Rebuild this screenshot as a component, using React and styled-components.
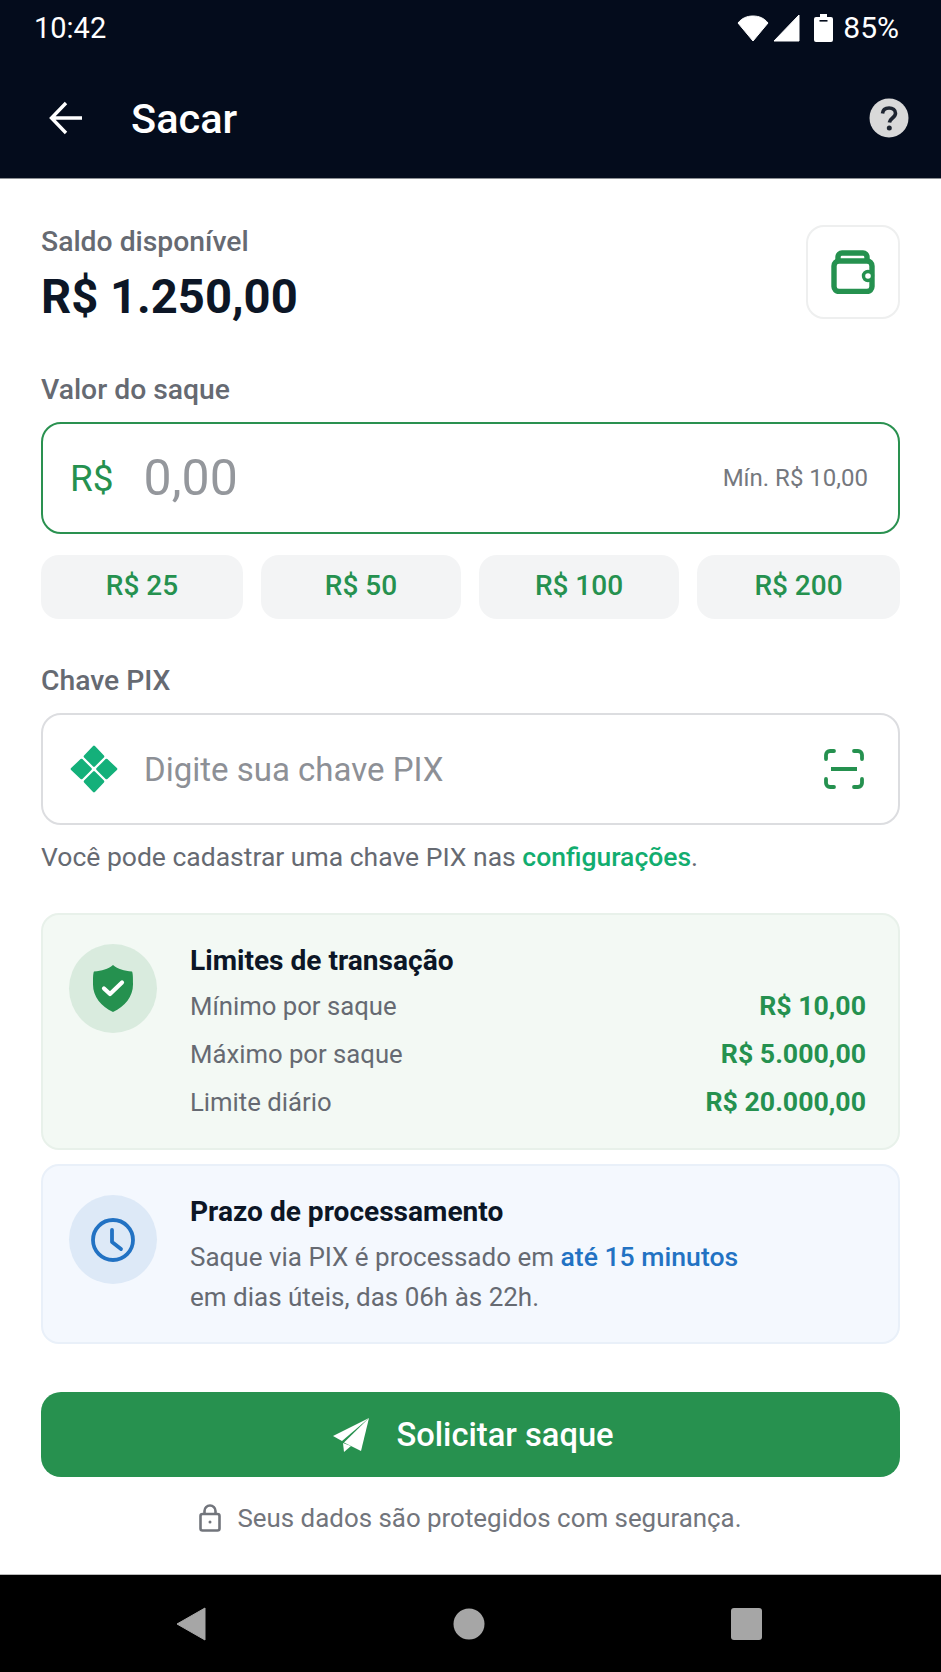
import React from "react";
import styled, { createGlobalStyle } from "styled-components";

const GlobalStyle = createGlobalStyle`
  html, body { margin: 0; padding: 0; background: #fff; }
  * { box-sizing: border-box; }
  body { font-family: Roboto, "Liberation Sans", sans-serif; }
`;

const Page = styled.div`
  width: 941px;
  height: 1672px;
  display: flex;
  flex-direction: column;
  background: #fff;
  overflow: hidden;
`;

const Header = styled.header`
  height: 179px;
  flex: none;
  background: #040c1c;
  color: #fff;
  border-bottom: 1px solid #8d9094;
`;

const StatusBar = styled.div`
  height: 55px;
  padding: 0 42px 0 34px;
  display: flex;
  align-items: center;
  justify-content: space-between;
  font-size: 29px;
`;

const StatusIcons = styled.div`
  display: flex;
  align-items: center;
`;

const StatusIcon = styled.span`
  display: flex;
  margin-right: ${(p) => p.$gap}px;
`;

const Percent = styled.span`
  font-size: 30px;
`;

const Toolbar = styled.div`
  height: 126px;
  padding: 0 32px 0 49px;
  display: flex;
  align-items: center;
`;

const Title = styled.h1`
  flex: 1;
  margin: 0 0 0 48px;
  font-size: 41.5px;
  font-weight: 500;
`;

const Main = styled.main`
  flex: 1;
  padding: 45px 41px 0;
  display: flex;
  flex-direction: column;
`;

const BalanceRow = styled.div`
  display: flex;
  justify-content: space-between;
  align-items: flex-start;
`;

const Label = styled.div`
  font-size: 28.3px;
  line-height: 36px;
  font-weight: 500;
  color: #666a72;
  margin-top: ${(p) => p.$top || 0}px;
`;

const Balance = styled.div`
  font-size: 47.2px;
  line-height: 56px;
  font-weight: 700;
  color: #0c1626;
  margin-top: 9px;
`;

const WalletBox = styled.div`
  width: 94px;
  height: 94px;
  margin-top: 1px;
  border: 2px solid #eeefef;
  border-radius: 18px;
  display: flex;
  align-items: center;
  justify-content: center;
`;

const Field = styled.div`
  height: 112px;
  margin-top: 14px;
  padding: 0 ${(p) => p.$right}px 0 ${(p) => p.$left}px;
  display: flex;
  align-items: center;
  border: 2px solid ${(p) => p.$border};
  border-radius: 20px;
`;

const Currency = styled.span`
  font-size: 37px;
  color: #25914f;
`;

const AmountHint = styled.span`
  flex: 1;
  margin-left: 30px;
  font-size: 50px;
  color: #94979c;
`;

const MinNote = styled.span`
  font-size: 24px;
  color: #75787e;
`;

const Chips = styled.div`
  display: grid;
  grid-template-columns: 202fr 200fr 200fr 203fr;
  gap: 18px;
  margin-top: 21px;
`;

const Chip = styled.div`
  height: 64px;
  padding-bottom: 3px;
  border-radius: 18px;
  background: #f3f4f5;
  color: #25914f;
  font-size: 28px;
  font-weight: 500;
  display: flex;
  align-items: center;
  justify-content: center;
`;

const KeyHint = styled.span`
  flex: 1;
  margin-left: 26px;
  font-size: 33px;
  color: #8d9096;
`;

const HelpText = styled.p`
  margin: 16px 0 0;
  font-size: 26.5px;
  line-height: 32px;
  color: #666a72;
`;

const Link = styled.span`
  color: #12ad6f;
  font-weight: 500;
`;

const InfoCard = styled.section`
  margin-top: ${(p) => p.$top}px;
  height: ${(p) => p.$h}px;
  padding: 29px 32px 0 26px;
  display: flex;
  gap: 33px;
  border: 2px solid ${(p) => p.$border};
  border-radius: 18px;
  background: ${(p) => p.$bg};
`;

const IconCircle = styled.div`
  width: 88px;
  height: 89px;
  flex: none;
  border-radius: 50%;
  background: ${(p) => p.$bg};
  display: flex;
  align-items: center;
  justify-content: center;
`;

const InfoBody = styled.div`
  flex: 1;
`;

const InfoTitle = styled.h2`
  margin: 0;
  font-size: 28.1px;
  line-height: 34px;
  font-weight: 700;
  color: #0c1626;
`;

const LimitRow = styled.div`
  height: 48px;
  display: flex;
  align-items: center;
  justify-content: space-between;
  font-size: 25.7px;
  color: #666a72;
  &:first-of-type { margin-top: 4px; }
`;

const LimitValue = styled.span`
  font-size: 26.7px;
  font-weight: 700;
  color: #25914f;
`;

const InfoText = styled.p`
  margin: 8px 0 0;
  font-size: 26px;
  line-height: 40px;
  color: #666a72;
`;

const Highlight = styled.span`
  color: #2272c3;
  font-size: 26.6px;
  font-weight: 500;
`;

const SubmitButton = styled.button`
  height: 85px;
  flex: none;
  margin-top: 48px;
  padding: 0 0 0 6px;
  border: 0;
  border-radius: 20px;
  background: #27914f;
  color: #fff;
  font-family: inherit;
  font-size: 32.7px;
  font-weight: 500;
  display: flex;
  align-items: center;
  justify-content: center;
  gap: 27px;
`;

const SecureNote = styled.div`
  margin-top: 25px;
  display: flex;
  align-items: center;
  justify-content: center;
  gap: 16px;
  font-size: 25.9px;
  line-height: 32px;
  color: #72757c;
`;

const NavBar = styled.nav`
  height: 98px;
  flex: none;
  background: #000;
  border-top: 1px solid #bbb;
  padding: 0 179px 0 176px;
  display: flex;
  align-items: center;
  justify-content: space-between;
`;

const WifiIcon = () => (
  <svg width="32" height="28" viewBox="0 0 32 28">
    <path d="M1 9C5 4 10 2 16 2s11 2 15 7L16 27 1 9Z" fill="#fff" stroke="#fff" strokeLinejoin="round" />
  </svg>
);

const SignalIcon = () => (
  <svg width="27" height="28" viewBox="0 0 27 28">
    <path d="M26 1v26H1L26 1Z" fill="#fff" stroke="#fff" strokeLinejoin="round" />
  </svg>
);

const BatteryIcon = () => (
  <svg width="19" height="28" viewBox="0 0 19 28">
    <path d="M6 0h7v3h4a2 2 0 0 1 2 2v21a2 2 0 0 1-2 2H2a2 2 0 0 1-2-2V5a2 2 0 0 1 2-2h4V0Z" fill="#fff" />
    <rect x="5.500" y="6" width="8" height="1.6" fill="#040c1c" />
  </svg>
);

const BackIcon = () => (
  <svg width="34" height="34" viewBox="0 0 34 34" fill="none" stroke="#fff" strokeWidth="3.4">
    <path d="M33 17H3M17 2 2.5 17 17 32" />
  </svg>
);

const HelpIcon = () => (
  <svg width="40" height="40" viewBox="0 0 40 40">
    <circle cx="20" cy="20" r="19.5" fill="#d9d9d9" />
    <path d="M13.5 15.5c.3-3.6 3-5.5 6.6-5.5 3.700 0 6.400 2.100 6.400 5.300 0 4.600-5.700 4.600-6.100 9.200" fill="none" stroke="#1d2430" strokeWidth="3.6" />
    <circle cx="20.300" cy="30" r="2.500" fill="#1d2430" />
  </svg>
);

const WalletIcon = () => (
  <svg width="44" height="44" viewBox="0 0 44 44" fill="none" stroke="#25914f" strokeWidth="5.400" strokeLinejoin="round">
    <path d="M7 12V7a4 4 0 0 1 4-4h21a4 4 0 0 1 4 4v5" />
    <rect x="3" y="11" width="38" height="30.500" rx="5" />
    <circle cx="37" cy="26" r="4.500" fill="#fff" strokeWidth="3.400" />
  </svg>
);

const PixIcon = () => (
  <svg width="48" height="48" viewBox="0 0 48 48" fill="#14b07a" stroke="#14b07a" strokeWidth="2.600" strokeLinejoin="round">
    <path d="M24 2 33 11.500 24 20.500 15 11.500Z" />
    <path d="M24 46 33 36.500 24 27.500 15 36.500Z" />
    <path d="M2 24 11.500 15 20.500 24 11.500 33Z" />
    <path d="M46 24 36.500 15 27.500 24 36.500 33Z" />
  </svg>
);

const ScanIcon = () => (
  <svg width="40" height="40" viewBox="0 0 40 40" fill="none" stroke="#25914f" strokeWidth="3.800" strokeLinecap="round">
    <path d="M2 10V6a4 4 0 0 1 4-4h4M30 2h4a4 4 0 0 1 4 4v4M2 30v4a4 4 0 0 0 4 4h4M38 30v4a4 4 0 0 1-4 4h-4" />
    <path d="M7 20h26" strokeLinecap="butt" strokeWidth="4" />
  </svg>
);

const ShieldIcon = () => (
  <svg width="40" height="47" viewBox="0 0 40 47">
    <path d="M20 0c5 4 11 6 19 6.500 1 2 1 6 1 13 0 12-8 22-20 27.500C8 41.500 0 31.500 0 19.500c0-7 0-11 1-13C9 6 15 4 20 0Z" fill="#25914f" />
    <path d="M11 23.500 17 29 29 17.500" fill="none" stroke="#fff" strokeWidth="4.200" strokeLinecap="round" strokeLinejoin="round" />
  </svg>
);

const ClockIcon = () => (
  <svg width="44" height="44" viewBox="0 0 44 44" fill="none" stroke="#2272c3" strokeWidth="3.800" strokeLinecap="round" strokeLinejoin="round">
    <circle cx="22" cy="22" r="20" />
    <path d="M21 12v12l9 7" />
  </svg>
);

const SendIcon = () => (
  <svg width="36" height="34" viewBox="0 0 36 34" fill="#fff">
    <path d="M36 0 0 18l9 5L36 0Z" />
    <path d="M36 0 11 24.500 28 33 36 0Z" />
    <path d="m10 25 1 9 7-6-8-3Z" />
  </svg>
);

const LockIcon = () => (
  <svg width="22" height="28" viewBox="0 0 22 28" fill="none" stroke="#72757c" strokeWidth="2.600">
    <rect x="1.500" y="10" width="19" height="16.500" rx="2" />
    <path d="M5.500 10V7a5.500 5.500 0 0 1 11 0v3" />
    <circle cx="11" cy="18" r="1.500" fill="#72757c" stroke="none" />
  </svg>
);

const NavBack = () => (
  <svg width="30" height="34" viewBox="0 0 30 34">
    <path d="M29 1v32L1 17 29 1Z" fill="#a6a6a6" stroke="#a6a6a6" strokeLinejoin="round" />
  </svg>
);

const NavHome = () => (
  <svg width="32" height="32" viewBox="0 0 32 32">
    <circle cx="16" cy="16" r="15.500" fill="#a6a6a6" />
  </svg>
);

const NavRecent = () => (
  <svg width="31" height="32" viewBox="0 0 31 32">
    <rect width="31" height="32" rx="3" fill="#a6a6a6" />
  </svg>
);

const quickAmounts = ["R$ 25", "R$ 50", "R$ 100", "R$ 200"];

const limits = [
  ["Mínimo por saque", "R$ 10,00"],
  ["Máximo por saque", "R$ 5.000,00"],
  ["Limite diário", "R$ 20.000,00"],
];

const App = () => {
  return (
    <Page>
      <GlobalStyle />
      <Header>
        <StatusBar>
          <span>10:42</span>
          <StatusIcons>
            <StatusIcon $gap={4}><WifiIcon /></StatusIcon>
            <StatusIcon $gap={14}><SignalIcon /></StatusIcon>
            <StatusIcon $gap={10}><BatteryIcon /></StatusIcon>
            <Percent>85%</Percent>
          </StatusIcons>
        </StatusBar>
        <Toolbar>
          <BackIcon />
          <Title>Sacar</Title>
          <HelpIcon />
        </Toolbar>
      </Header>

      <Main>
        <BalanceRow>
          <div>
            <Label>Saldo disponível</Label>
            <Balance>R$ 1.250,00</Balance>
          </div>
          <WalletBox>
            <WalletIcon />
          </WalletBox>
        </BalanceRow>

        <Label $top={47}>Valor do saque</Label>
        <Field $left={27} $right={30} $border="#2a9150">
          <Currency>R$</Currency>
          <AmountHint>0,00</AmountHint>
          <MinNote>Mín. R$ 10,00</MinNote>
        </Field>
        <Chips>
          {quickAmounts.map((amount) => (
            <Chip key={amount}>{amount}</Chip>
          ))}
        </Chips>

        <Label $top={44}>Chave PIX</Label>
        <Field $left={27} $right={34} $border="#dcdde0">
          <PixIcon />
          <KeyHint>Digite sua chave PIX</KeyHint>
          <ScanIcon />
        </Field>
        <HelpText>
          Você pode cadastrar uma chave PIX nas <Link>configurações</Link>.
        </HelpText>

        <InfoCard $top={40} $h={237} $bg="#f3f9f4" $border="#e8f1ea">
          <IconCircle $bg="#d9ebde">
            <ShieldIcon />
          </IconCircle>
          <InfoBody>
            <InfoTitle>Limites de transação</InfoTitle>
            {limits.map(([name, value]) => (
              <LimitRow key={name}>
                <span>{name}</span>
                <LimitValue>{value}</LimitValue>
              </LimitRow>
            ))}
          </InfoBody>
        </InfoCard>

        <InfoCard $top={14} $h={180} $bg="#f4f8fe" $border="#e9f0f9">
          <IconCircle $bg="#dde9f7">
            <ClockIcon />
          </IconCircle>
          <InfoBody>
            <InfoTitle>Prazo de processamento</InfoTitle>
            <InfoText>
              Saque via PIX é processado em <Highlight>até 15 minutos</Highlight>
              <br />
              em dias úteis, das 06h às 22h.
            </InfoText>
          </InfoBody>
        </InfoCard>

        <SubmitButton>
          <SendIcon />
          Solicitar saque
        </SubmitButton>
        <SecureNote>
          <LockIcon />
          Seus dados são protegidos com segurança.
        </SecureNote>
      </Main>

      <NavBar>
        <NavBack />
        <NavHome />
        <NavRecent />
      </NavBar>
    </Page>
  );
};

export default App;
